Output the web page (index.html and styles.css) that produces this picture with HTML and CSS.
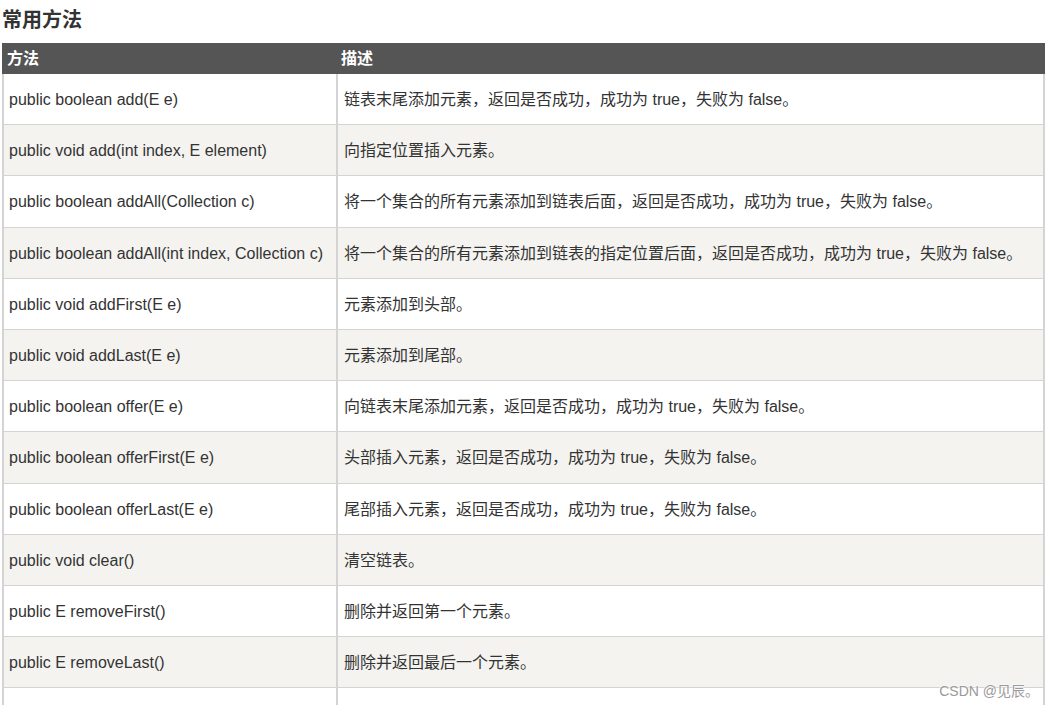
FILE: index.html
```html
<!DOCTYPE html>
<html lang="zh-CN">
<head>
<meta charset="utf-8">
<title>常用方法</title>
<link rel="stylesheet" href="styles.css">
</head>
<body>
<h2 class="title">常用方法</h2>
<table class="ref">
  <colgroup><col class="c1"><col class="c2"></colgroup>
  <thead>
    <tr><th>方法</th><th>描述</th></tr>
  </thead>
  <tbody>
    <tr><td>public boolean add(E e)</td><td>链表末尾添加元素，返回是否成功，成功为 true，失败为 false。</td></tr>
    <tr><td>public void add(int index, E element)</td><td>向指定位置插入元素。</td></tr>
    <tr><td>public boolean addAll(Collection c)</td><td>将一个集合的所有元素添加到链表后面，返回是否成功，成功为 true，失败为 false。</td></tr>
    <tr><td>public boolean addAll(int index, Collection c)</td><td>将一个集合的所有元素添加到链表的指定位置后面，返回是否成功，成功为 true，失败为 false。</td></tr>
    <tr><td>public void addFirst(E e)</td><td>元素添加到头部。</td></tr>
    <tr><td>public void addLast(E e)</td><td>元素添加到尾部。</td></tr>
    <tr><td>public boolean offer(E e)</td><td>向链表末尾添加元素，返回是否成功，成功为 true，失败为 false。</td></tr>
    <tr><td>public boolean offerFirst(E e)</td><td>头部插入元素，返回是否成功，成功为 true，失败为 false。</td></tr>
    <tr><td>public boolean offerLast(E e)</td><td>尾部插入元素，返回是否成功，成功为 true，失败为 false。</td></tr>
    <tr><td>public void clear()</td><td>清空链表。</td></tr>
    <tr><td>public E removeFirst()</td><td>删除并返回第一个元素。</td></tr>
    <tr><td>public E removeLast()</td><td>删除并返回最后一个元素。</td></tr>
    <tr><td>public boolean remove(Object o)</td><td>删除某一元素，返回是否成功，成功为 true，失败为 false。</td></tr>
  </tbody>
</table>
<div class="watermark">CSDN @见辰。</div>
</body>
</html>
```

FILE: styles.css
```css
html, body {
  margin: 0;
  padding: 0;
  background: #fff;
}
body {
  padding: 0 2px;
  font-family: "Liberation Sans", Arial, "Noto Sans CJK SC", sans-serif;
  color: #333;
  position: relative;
  overflow: hidden;
  height: 705px;
}
.title {
  margin: 5px 0 8px 0;
  font-size: 20px;
  line-height: 30px;
  font-weight: bold;
  color: #333;
}
.ref {
  width: 1043px;
  table-layout: fixed;
  border-collapse: separate;
  border-spacing: 0;
  font-size: 16px;
}
.ref .c1 { width: 334px; }
.ref .c2 { width: 709px; }
.ref thead tr {
  height: 31px;
}
.ref th {
  background: #555;
  color: #fff;
  font-weight: bold;
  text-align: left;
  padding: 0 5px;
  line-height: 20px;
  border: 0;
}
.ref tbody tr {
  height: 51.2px;
}
.ref td {
  padding: 2px 5px 0 5px;
  border-left: 2px solid #d4d4d4;
  border-bottom: 1px solid #d4d4d4;
  line-height: 20px;
  white-space: nowrap;
  vertical-align: middle;
}
.ref td + td {
  padding-left: 6px;
  border-right: 2px solid #d4d4d4;
}
.ref tbody tr:nth-child(even) td {
  background: #f4f3f0;
}
.watermark {
  position: absolute;
  right: 10px;
  top: 680px;
  font-size: 14px;
  color: #9a9a9a;
  text-shadow: 0 0 2px #fff, 0 0 2px #fff;
}
```
